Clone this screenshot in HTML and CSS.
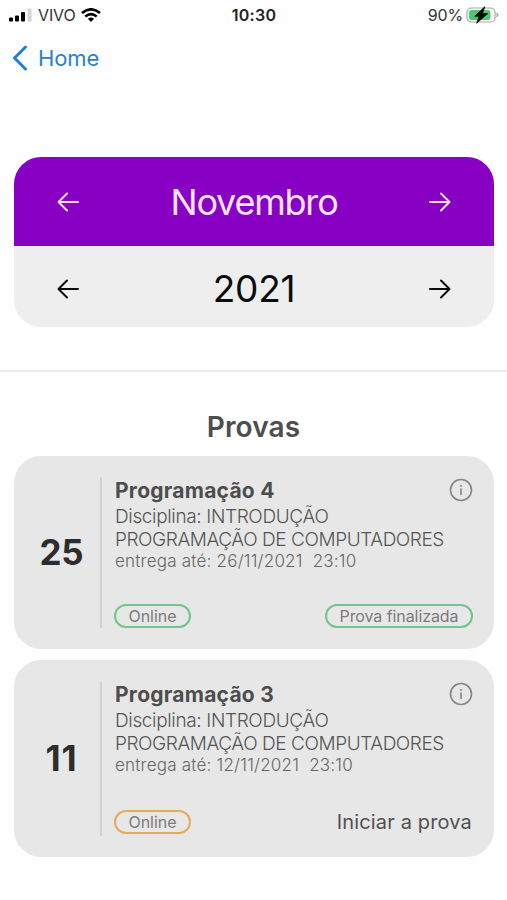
FILE: index.html
```html
<!DOCTYPE html>
<html lang="pt-BR">
<head>
<meta charset="utf-8">
<meta name="viewport" content="width=device-width, initial-scale=1">
<title>Provas</title>
<link rel="stylesheet" href="styles.css">
</head>
<body>
<header class="status">
  <div class="status-left">
    <svg class="signal" width="23" height="14" viewBox="0 0 23 14"><rect x="0" y="9.5" width="4" height="4" rx="1"/><rect x="6" y="7.5" width="4" height="6" rx="1"/><rect x="12" y="4" width="4" height="9.5" rx="1"/><rect x="18.5" y="0.5" width="4" height="13" rx="1" fill="#d4d4d4"/></svg>
    <span class="carrier">VIVO</span>
    <svg class="wifi" width="20" height="14" viewBox="0 0 20 14" fill="none" stroke="#000" stroke-width="2.6"><path d="M1 5.1Q10-2.5 19 5.1M4.3 8.6Q10 3.8 15.7 8.6"/><path d="M6.9 10.8Q10 8.2 13.1 10.8L10 14Z" fill="#000" stroke="none"/></svg>
  </div>
  <time class="clock">10:30</time>
  <div class="status-right">
    <span class="percent">90%</span>
    <svg class="battery" width="33" height="18" viewBox="0 0 33 18"><rect x="1" y="2" width="28" height="14" rx="4.5" fill="#fff" stroke="#a5a5a5" stroke-width="1.2"/><rect x="3" y="4" width="21.500" height="10" rx="2.500" fill="#4cc776"/><path d="M30.500 6.500v5q2-.7 2-2.500t-2-2.500Z" fill="#a5a5a5"/><path d="M18.800.8 8.800 10.200h4.600L10.600 17.200 21.800 7.600h-5.400Z" fill="#000" stroke="#000" stroke-width=".8" stroke-linejoin="round"/></svg>
  </div>
</header>
<nav class="nav">
  <a class="back"><svg width="16" height="26" viewBox="0 0 16 26" fill="none" stroke="#1f7fd6" stroke-width="2.900" stroke-linecap="round" stroke-linejoin="round"><path d="M14.500 2 3.500 13 14.500 24"/></svg><span>Home</span></a>
</nav>
<main>
  <section class="picker">
    <div class="row month">
      <svg class="arrow" viewBox="0 0 22 20"><path d="M21 10H1.500M10 1.500 1.500 10l8.500 8.500"/></svg>
      <span class="value">Novembro</span>
      <svg class="arrow" viewBox="0 0 22 20"><path d="M1 10h19.500M12 1.500l8.500 8.500-8.500 8.500"/></svg>
    </div>
    <div class="row year">
      <svg class="arrow" viewBox="0 0 22 20"><path d="M21 10H1.500M10 1.500 1.500 10l8.500 8.500"/></svg>
      <span class="value">2021</span>
      <svg class="arrow" viewBox="0 0 22 20"><path d="M1 10h19.500M12 1.500l8.500 8.500-8.500 8.500"/></svg>
    </div>
  </section>
  <hr class="divider">
  <h1 class="title">Provas</h1>
  <section class="exams">
    <article class="card">
      <div class="day">25</div>
      <div class="body">
        <div class="head"><h2>Programação 4</h2><svg class="info" viewBox="0 0 24 24"><circle cx="12" cy="12" r="10.500"/><path d="M12 10.500v6.500M12 7v1.800"/></svg></div>
        <p class="subject"><span class="line-a">Disciplina: INTRODUÇÃO</span><br><span class="line-b">PROGRAMAÇÃO DE COMPUTADORES</span></p>
        <p class="due">entrega até: 26/11/2021&nbsp; 23:10</p>
        <div class="foot"><span class="pill">Online</span><span class="pill done">Prova finalizada</span></div>
      </div>
    </article>
    <article class="card pending">
      <div class="day">11</div>
      <div class="body">
        <div class="head"><h2>Programação 3</h2><svg class="info" viewBox="0 0 24 24"><circle cx="12" cy="12" r="10.500"/><path d="M12 10.500v6.500M12 7v1.800"/></svg></div>
        <p class="subject"><span class="line-a">Disciplina: INTRODUÇÃO</span><br><span class="line-b">PROGRAMAÇÃO DE COMPUTADORES</span></p>
        <p class="due">entrega até: 12/11/2021&nbsp; 23:10</p>
        <div class="foot"><span class="pill">Online</span><a class="start">Iniciar a prova</a></div>
      </div>
    </article>
  </section>
</main>
</body>
</html>
```
FILE: styles.css
```css
* { box-sizing: border-box; }
body { margin: 0; background: #fefefe; font-family: Inter, "Liberation Sans", sans-serif; color: #555; white-space: nowrap; }
h1, h2, p { margin: 0; }
svg { display: block; flex: none; }
.status { height: 29px; display: grid; grid-template-columns: 1fr auto 1fr; align-items: center; padding: 0 8px 0 9px; font-size: 16px; color: #333; }
.status-left, .status-right { display: flex; align-items: center; }
.status-left { gap: 6px; }
.carrier { letter-spacing: -.15px; }
.status-right { justify-content: flex-end; gap: 3px; }
.percent { letter-spacing: -.2px; }
.clock { color: #222; font-weight: 600; letter-spacing: .3px; }
.nav { height: 128px; padding: 16px 11px 0; }
.back { display: flex; align-items: center; gap: 11px; height: 26px; color: #2a80ce; font-size: 22px; letter-spacing: -.1px; }
.picker { margin: 0 13px 0 14px; border-radius: 27px; overflow: hidden; background: #eee; }
.row { display: flex; align-items: center; justify-content: space-between; padding: 0 43px; }
.month { height: 88.5px; padding-top: 2px; background: #8900c5; color: #fbe4ff; font-size: 36px; }
.month .value { font-weight: 400; letter-spacing: -1.2px; }
.year { height: 81.5px; padding-top: 5px; color: #0c0c0c; font-size: 37px; }
.year .value { letter-spacing: -.3px; line-height: 44px; }
.arrow { width: 22px; height: 20px; fill: none; stroke: currentColor; stroke-width: 2; stroke-linecap: round; stroke-linejoin: round; }
.divider { margin: 43px 0 0; border: 0; height: 2px; background: #ebebeb; }
.title { margin-top: 36px; height: 47.5px; line-height: 38px; font-size: 28px; font-weight: 600; letter-spacing: .15px; text-align: center; color: #4e4e4e; }
.exams { display: grid; gap: 11px; padding: 0 13px 0 14px; }
.card { display: flex; height: 193px; padding: 21px 21px 21px 0; border-radius: 27px; background: #e7e7e7; }
.pending { height: 197px; padding-top: 22px; }
.day { width: 88px; flex: none; display: flex; align-items: center; justify-content: center; padding-left: 9px; border-right: 2px solid #d1d1d1; font-size: 35px; font-weight: 700; letter-spacing: -.3px; color: #2d2d2d; }
.pending .day { letter-spacing: 1px; padding-bottom: 1px; }
.body { flex: 1; display: flex; flex-direction: column; padding-left: 12px; }
.head { display: flex; justify-content: space-between; height: 28px; padding-left: 1px; }
.head h2 { font-size: 21px; line-height: 27px; font-weight: 650; letter-spacing: .25px; color: #4d4d4d; }
.pending .head { height: 27px; }
.pending h2 { line-height: 25px; }
.info { width: 24px; height: 24px; margin-top: 1px; fill: none; stroke: #858585; stroke-width: 1.6; }
.pending .info { margin-top: 0; }
.subject { padding-left: 1px; font-size: 19px; font-weight: 350; line-height: 23px; letter-spacing: -.43px; color: #555; }
.line-a { letter-spacing: -.36px; }
.due { padding-left: 1px; font-size: 17px; font-weight: 350; line-height: 21px; letter-spacing: .22px; color: #666; }
.foot { margin-top: auto; height: 24px; display: flex; align-items: center; justify-content: space-between; }
.pending .foot { margin-bottom: 2px; }
.pill { height: 24px; width: 77px; border: 2px solid #71c58a; border-radius: 12px; text-align: center; font-size: 16px; line-height: 21px; color: #7b7b7b; }
.done { width: 148px; letter-spacing: -.08px; }
.pending .pill { border-color: #e5ab57; }
.start { padding-right: 1px; font-size: 20px; letter-spacing: .15px; color: #505050; }
```
